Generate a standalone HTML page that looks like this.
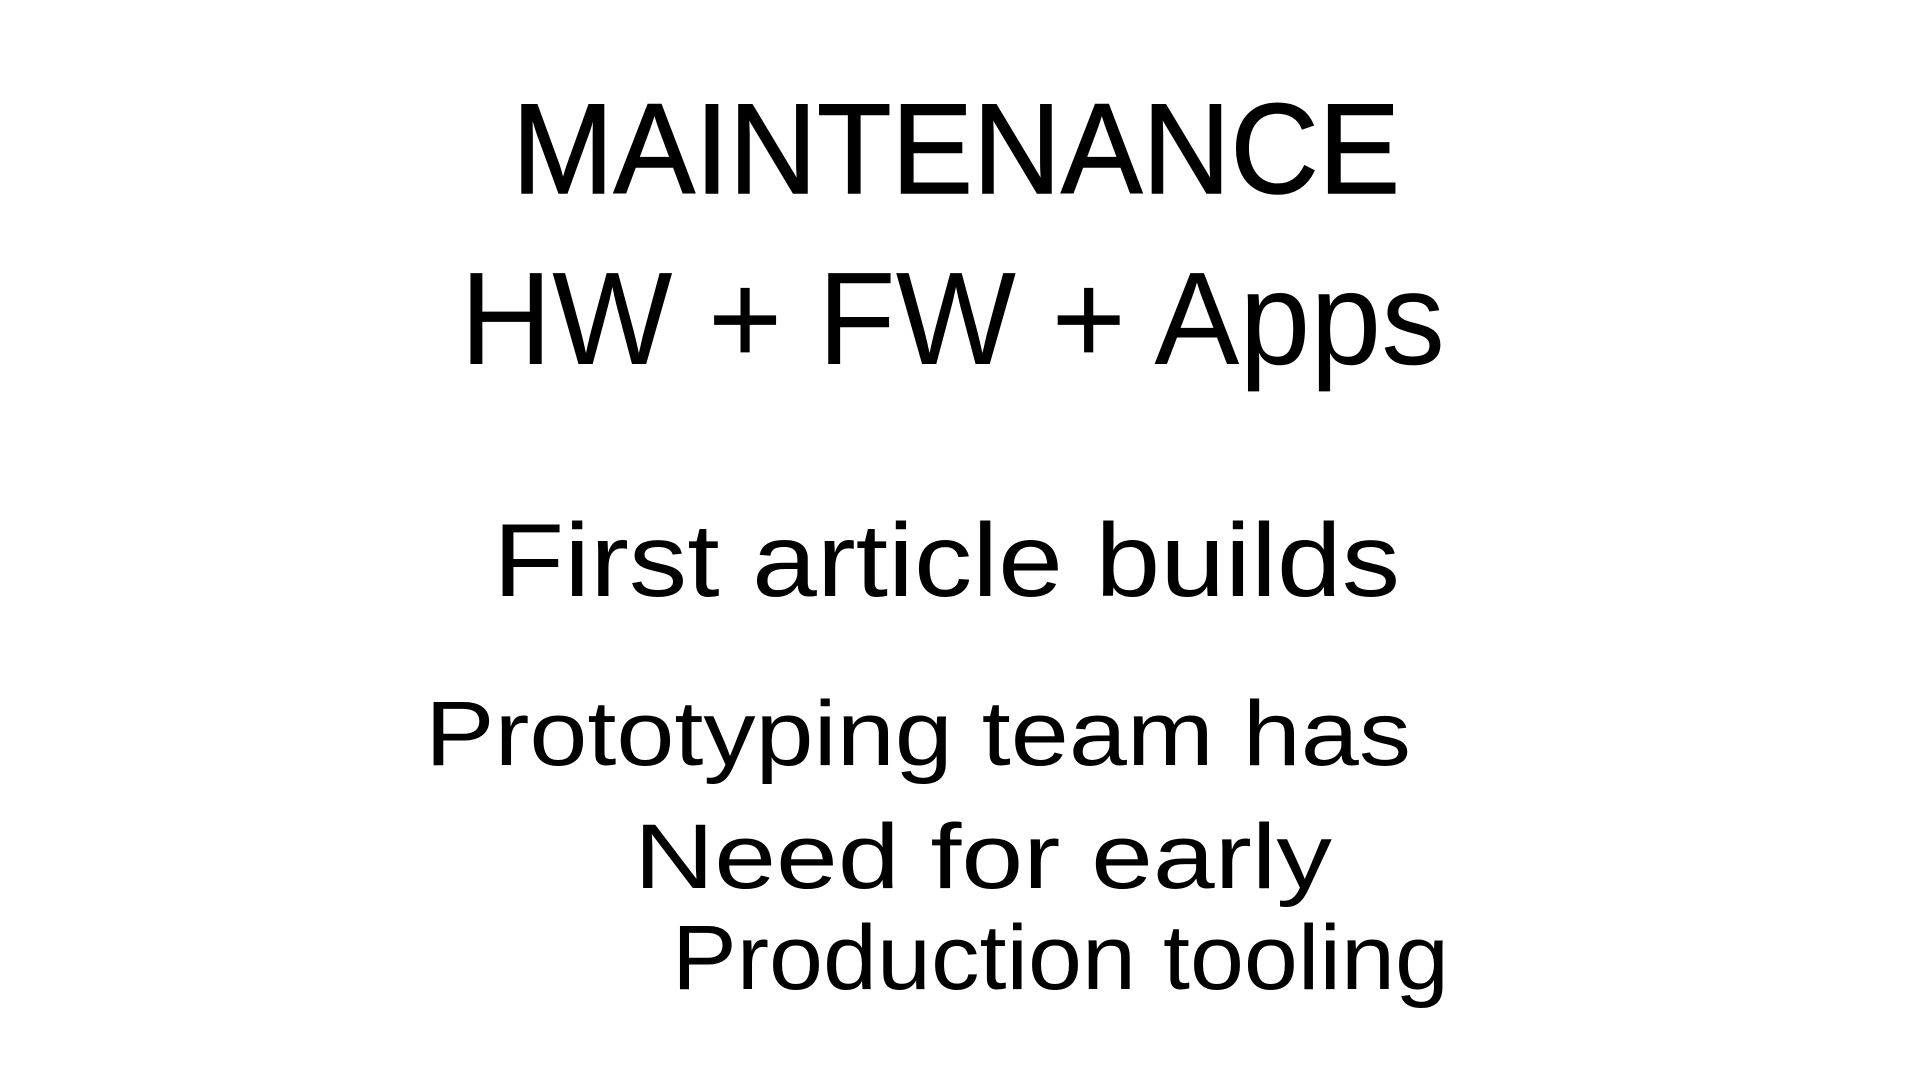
<!DOCTYPE html>
<html><head><meta charset="utf-8"><style>
html,body{margin:0;padding:0;background:#fff;width:1920px;height:1080px;overflow:hidden}
svg{display:block}
text{fill:#000}
.t{font-family:"Liberation Sans","DejaVu Sans",sans-serif;stroke:#000;stroke-width:1.5}
.h{font-family:"Liberation Sans","DejaVu Sans",sans-serif;font-weight:normal}
</style></head><body>
<svg width="1920" height="1080" viewBox="0 0 1920 1080">
<text class="t" x="512" y="193" font-size="128" textLength="888" lengthAdjust="spacingAndGlyphs">MAINTENANCE</text>
<text class="h" x="460" y="364" font-size="132" textLength="985" lengthAdjust="spacingAndGlyphs">HW + FW + Apps</text>
<text class="h" x="493" y="596" font-size="104" textLength="907" lengthAdjust="spacingAndGlyphs">First article builds</text>
<text class="h" x="425" y="765" font-size="92" textLength="986" lengthAdjust="spacingAndGlyphs">Prototyping team has</text>
<text class="h" x="634" y="888" font-size="92" textLength="698" lengthAdjust="spacingAndGlyphs">Need for early</text>
<text class="h" x="672" y="989" font-size="92" textLength="777" lengthAdjust="spacingAndGlyphs">Production tooling</text>
</svg>
</body></html>
